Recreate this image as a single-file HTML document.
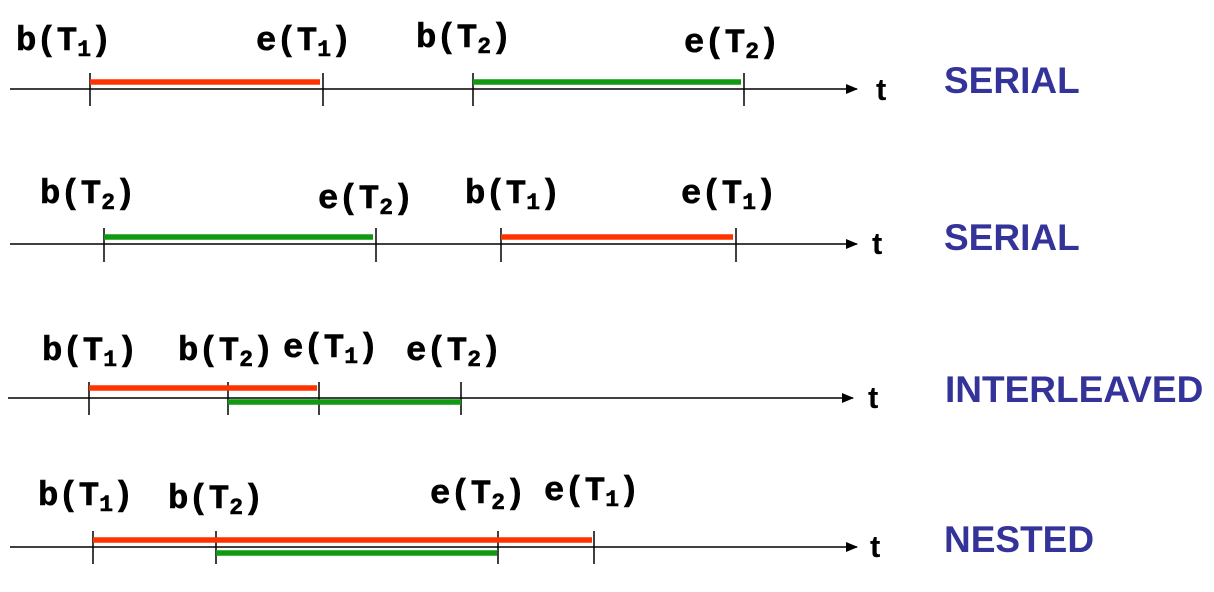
<!DOCTYPE html>
<html><head><style>
body{margin:0;background:#fff;width:1214px;height:592px;overflow:hidden}
svg{display:block}
.l{font-family:"Liberation Mono",monospace;font-weight:bold;font-size:34px;fill:#000;stroke:#000;stroke-width:0.6}
.s{font-size:23px}
.t{font-family:"Liberation Sans",sans-serif;font-weight:bold;font-size:31px;fill:#000}
.n{font-family:"Liberation Sans",sans-serif;font-weight:bold;font-size:37px;fill:#333399}
</style></head><body>
<svg width="1214" height="592" viewBox="0 0 1214 592">
<defs><marker id="a" markerWidth="12" markerHeight="10" refX="11" refY="5" orient="auto" markerUnits="userSpaceOnUse"><path d="M0,0 L12,5 L0,10 Z" fill="#000"/></marker></defs>
<g stroke="#000" stroke-width="1.5">
<line x1="10" y1="89" x2="857" y2="89" marker-end="url(#a)"/>
<line x1="10" y1="244" x2="857" y2="244" marker-end="url(#a)"/>
<line x1="8" y1="398" x2="853" y2="398" marker-end="url(#a)"/>
<line x1="10" y1="547" x2="857" y2="547" marker-end="url(#a)"/>
<path d="M90 73V106M323 73V106M473 73V106M744 73V106 M104 228V262M376 228V262M501 228V262M736 228V262 M89 382V415M228 382V415M319 382V415M461 382V415 M93 531V564M216 531V564M498 531V564M594 531V564"/>
</g>
<g stroke-width="5.5">
<line x1="90" y1="82" x2="320" y2="82" stroke="#ff3300"/>
<line x1="473" y1="82" x2="741" y2="82" stroke="#119911"/>
<line x1="104" y1="237" x2="373" y2="237" stroke="#119911"/>
<line x1="501" y1="237" x2="733" y2="237" stroke="#ff3300"/>
<line x1="89" y1="388" x2="317" y2="388" stroke="#ff3300"/>
<line x1="228" y1="402" x2="461" y2="402" stroke="#119911"/>
<line x1="93" y1="540" x2="592" y2="540" stroke="#ff3300"/>
<line x1="216" y1="553" x2="497" y2="553" stroke="#119911"/>
</g>
<text class="l" x="16" y="50">b(T<tspan class="s" dy="6">1</tspan><tspan dy="-6">)</tspan></text>
<text class="l" x="256" y="50">e(T<tspan class="s" dy="6">1</tspan><tspan dy="-6">)</tspan></text>
<text class="l" x="416" y="47">b(T<tspan class="s" dy="6">2</tspan><tspan dy="-6">)</tspan></text>
<text class="l" x="684" y="52">e(T<tspan class="s" dy="6">2</tspan><tspan dy="-6">)</tspan></text>
<text class="l" x="40" y="203">b(T<tspan class="s" dy="6">2</tspan><tspan dy="-6">)</tspan></text>
<text class="l" x="318" y="208">e(T<tspan class="s" dy="6">2</tspan><tspan dy="-6">)</tspan></text>
<text class="l" x="465" y="203">b(T<tspan class="s" dy="6">1</tspan><tspan dy="-6">)</tspan></text>
<text class="l" x="681" y="203">e(T<tspan class="s" dy="6">1</tspan><tspan dy="-6">)</tspan></text>
<text class="l" x="42" y="360">b(T<tspan class="s" dy="6">1</tspan><tspan dy="-6">)</tspan></text>
<text class="l" x="178" y="360">b(T<tspan class="s" dy="6">2</tspan><tspan dy="-6">)</tspan></text>
<text class="l" x="283" y="357">e(T<tspan class="s" dy="6">1</tspan><tspan dy="-6">)</tspan></text>
<text class="l" x="406" y="360">e(T<tspan class="s" dy="6">2</tspan><tspan dy="-6">)</tspan></text>
<text class="l" x="38" y="505">b(T<tspan class="s" dy="6">1</tspan><tspan dy="-6">)</tspan></text>
<text class="l" x="168" y="508">b(T<tspan class="s" dy="6">2</tspan><tspan dy="-6">)</tspan></text>
<text class="l" x="430" y="503">e(T<tspan class="s" dy="6">2</tspan><tspan dy="-6">)</tspan></text>
<text class="l" x="544" y="500">e(T<tspan class="s" dy="6">1</tspan><tspan dy="-6">)</tspan></text>
<text class="t" x="876" y="100">t</text>
<text class="t" x="872" y="254">t</text>
<text class="t" x="868" y="408">t</text>
<text class="t" x="870" y="557">t</text>
<text class="n" x="944" y="93">SERIAL</text>
<text class="n" x="944" y="250">SERIAL</text>
<text class="n" x="945" y="402">INTERLEAVED</text>
<text class="n" x="944" y="552">NESTED</text>
</svg>
</body></html>
